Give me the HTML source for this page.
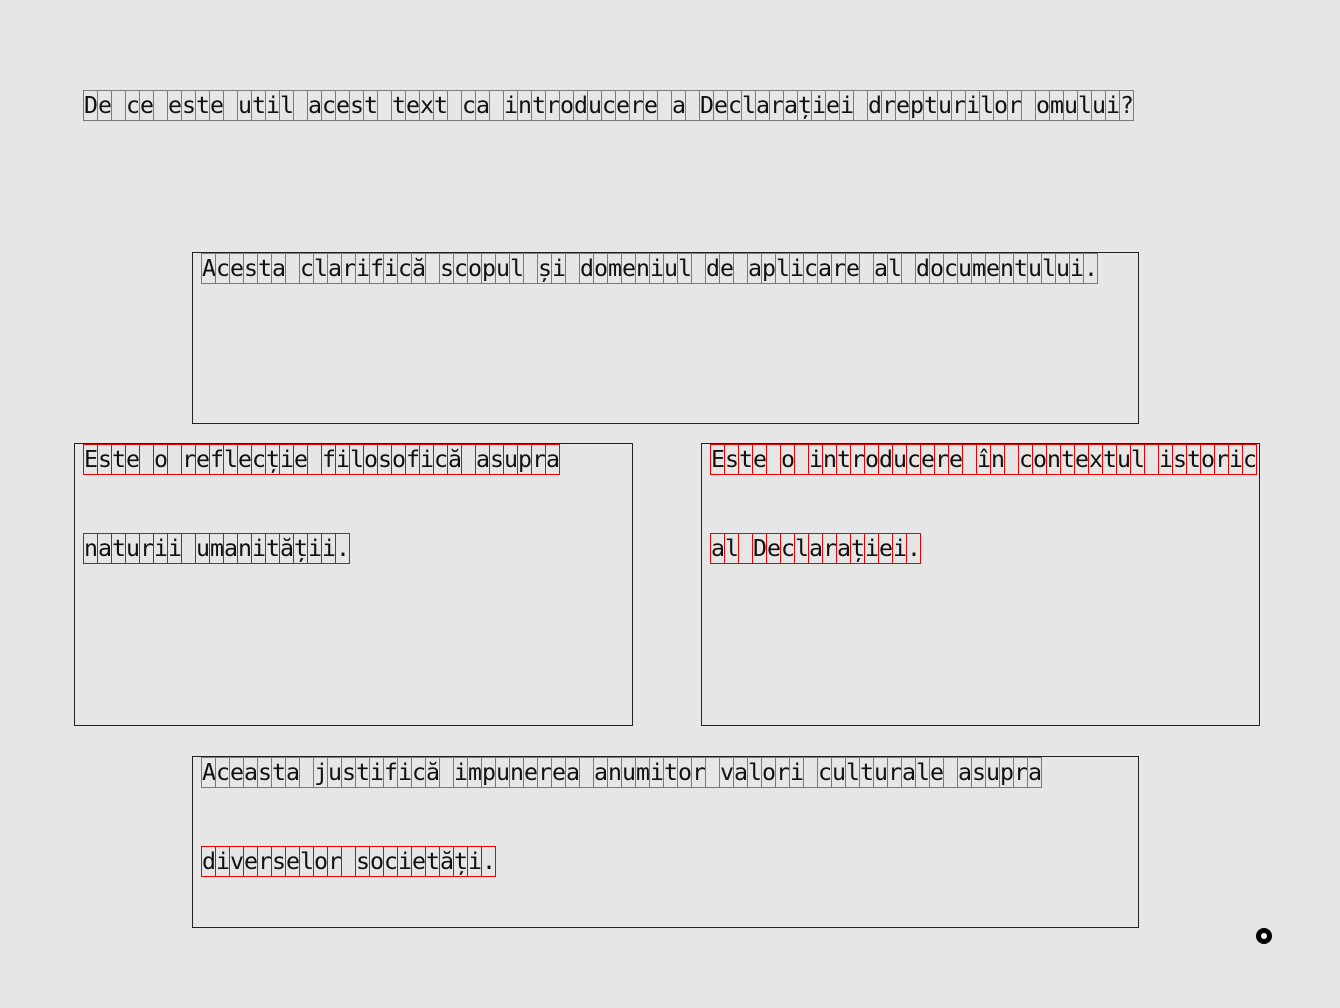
<!DOCTYPE html>
<html><head><meta charset="utf-8"><style>
html,body{margin:0;padding:0}
body{width:1340px;height:1008px;background:#e6e6e6;position:relative;overflow:hidden;font-family:"DejaVu Sans Mono","Liberation Mono",monospace;font-size:23.25px;color:#111}
.box{position:absolute;border:1px solid #222;box-sizing:border-box}
.ln{position:absolute;white-space:nowrap;height:31px;line-height:31px;display:flex}
.ln span{display:inline-block;width:15px;height:31px;box-sizing:border-box;border:1px solid #e00;margin-right:-1px;text-align:center;line-height:29px;overflow:visible}
.g span{border-color:#7a7a7a}
.dot{position:absolute;left:1256px;top:928px;width:16px;height:16px;border-radius:50%;background:#000}
.dot:after{content:"";position:absolute;left:5px;top:5px;width:6px;height:6px;border-radius:50%;background:#fff}
</style></head><body>
<div class="box" style="left:192px;top:252px;width:947px;height:172px"></div>
<div class="box" style="left:74px;top:443px;width:559px;height:283px"></div>
<div class="box" style="left:701px;top:443px;width:559px;height:283px"></div>
<div class="box" style="left:192px;top:756px;width:947px;height:172px"></div>

<div class="ln g" style="left:83px;top:90px">De ce este util acest text ca introducere a Declarației drepturilor omului?</div>
<div class="ln g" style="left:201px;top:253px">Acesta clarifică scopul și domeniul de aplicare al documentului.</div>
<div class="ln" style="left:83px;top:444px">Este o reflecție filosofică asupra</div>
<div class="ln" style="left:83px;top:533px">naturii umanității.</div>
<div class="ln" style="left:710px;top:444px">Este o introducere în contextul istoric</div>
<div class="ln" style="left:710px;top:533px">al Declarației.</div>
<div class="ln g" style="left:201px;top:757px">Aceasta justifică impunerea anumitor valori culturale asupra</div>
<div class="ln" style="left:201px;top:846px">diverselor societăți.</div>
<div class="dot"></div>
<script>
document.querySelectorAll('.ln').forEach(function(el){
  var t=el.textContent;el.textContent='';
  for(var i=0;i<t.length;i++){var s=document.createElement('span');s.textContent=t[i]===' '?'\u00a0':t[i];el.appendChild(s);}
});
</script>
</body></html>
